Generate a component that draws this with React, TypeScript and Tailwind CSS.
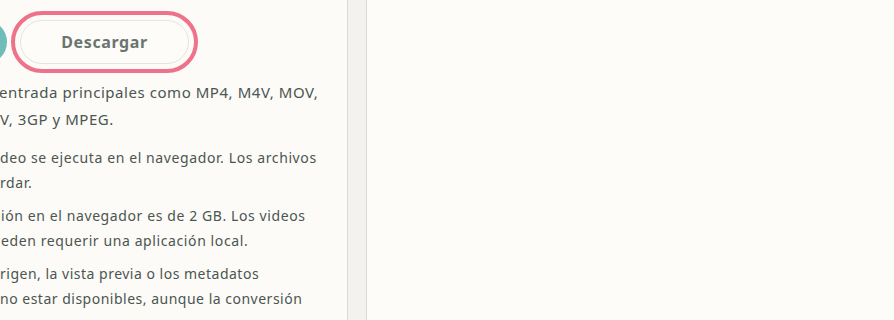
import React from "react";

const font = { fontFamily: '"Noto Sans", "Liberation Sans", sans-serif' };

function Line({ text, ml }: { text: string; ml: string }) {
  return <div className={`whitespace-nowrap ${ml}`}>{text}</div>;
}

export default function App() {
  return (
    <div className="flex w-[894px] h-[320px] overflow-hidden bg-[#fdfcf8]" style={font}>
      <div className="w-[347px] shrink-0 overflow-hidden bg-[#fcfbf7]">
        <div className="flex items-center pt-[20px] -ml-[37px] gap-[13px]">
          <div className="w-[44px] h-[44px] rounded-full bg-[#6fbdb8] shrink-0" />
          <button className="w-[169px] h-[44px] shrink-0 rounded-full border border-[#e6e4de] bg-[#fdfcf8] text-[16px] tracking-[0.6px] font-bold text-[#6b7570] outline-[4px] outline-solid outline-[#ee7289] outline-offset-[5px]">
            Descargar
          </button>
        </div>
        <div className="mt-[15px] text-[15px] leading-[27px] tracking-[0.55px] text-[#4b5551]">
          <Line text="entrada principales como MP4, M4V, MOV," ml="-ml-[1px]" />
          <Line text="V, 3GP y MPEG." ml="ml-0" />
        </div>
        <div className="mt-[12px] text-[14px] leading-[25px] tracking-[0.6px] text-[#4b5551]">
          <Line text="deo se ejecuta en el navegador. Los archivos" ml="ml-0" />
          <Line text="rdar." ml="ml-0" />
        </div>
        <div className="mt-[8px] text-[14px] leading-[25px] tracking-[0.6px] text-[#4b5551]">
          <Line text="ión en el navegador es de 2 GB. Los videos" ml="ml-[1px]" />
          <Line text="eden requerir una aplicación local." ml="ml-[1px]" />
        </div>
        <div className="mt-[8px] text-[14px] leading-[25px] tracking-[0.5px] text-[#4b5551]">
          <Line text="rigen, la vista previa o los metadatos" ml="ml-0" />
          <Line text="no estar disponibles, aunque la conversión" ml="ml-0" />
        </div>
      </div>
      <div className="w-[20px] shrink-0 bg-[#f3f2ee] border-x border-[#dcdad4]" />
      <div className="flex-1 bg-[#fdfcf8]" />
    </div>
  );
}
